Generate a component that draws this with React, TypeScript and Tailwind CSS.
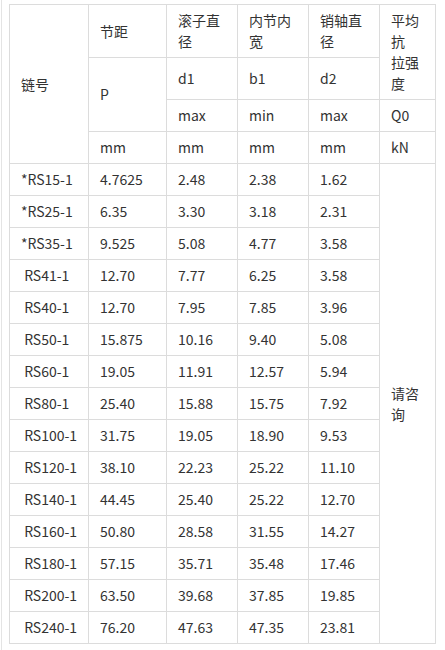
import React from "react";

const rows: string[][] = [
  ["*RS15-1", "4.7625", "2.48", "2.38", "1.62"],
  ["*RS25-1", "6.35", "3.30", "3.18", "2.31"],
  ["*RS35-1", "9.525", "5.08", "4.77", "3.58"],
  ["\u00a0RS41-1", "12.70", "7.77", "6.25", "3.58"],
  ["\u00a0RS40-1", "12.70", "7.95", "7.85", "3.96"],
  ["\u00a0RS50-1", "15.875", "10.16", "9.40", "5.08"],
  ["\u00a0RS60-1", "19.05", "11.91", "12.57", "5.94"],
  ["\u00a0RS80-1", "25.40", "15.88", "15.75", "7.92"],
  ["\u00a0RS100-1", "31.75", "19.05", "18.90", "9.53"],
  ["\u00a0RS120-1", "38.10", "22.23", "25.22", "11.10"],
  ["\u00a0RS140-1", "44.45", "25.40", "25.22", "12.70"],
  ["\u00a0RS160-1", "50.80", "28.58", "31.55", "14.27"],
  ["\u00a0RS180-1", "57.15", "35.71", "35.48", "17.46"],
  ["\u00a0RS200-1", "63.50", "39.68", "37.85", "19.85"],
  ["\u00a0RS240-1", "76.20", "47.63", "47.35", "23.81"],
];

const td = "border border-[#dcdcdc] px-[11px] py-[5px] align-middle";

export default function App() {
  return (
    <div
      className="min-h-[650px] bg-white ml-px border-l border-[#e4e4e4] pl-[7px] pt-[4px] text-[14px] leading-[21px] text-[#333]"
      style={{ fontFamily: '"Noto Sans CJK SC", "Noto Sans", sans-serif' }}
    >
      <table className="border-collapse table-fixed w-[426px]">
        <colgroup>
          <col className="w-[79px]" />
          <col className="w-[78px]" />
          <col className="w-[71px]" />
          <col className="w-[71px]" />
          <col className="w-[71px]" />
          <col className="w-[56px]" />
        </colgroup>
        <tbody>
          <tr>
            <td className={td} rowSpan={4}>链号</td>
            <td className={td}>节距</td>
            <td className={td}>滚子直径</td>
            <td className={td}>内节内宽</td>
            <td className={td}>销轴直径</td>
            <td className={td} rowSpan={2}>
              平均
              <br />
              抗<br />
              拉强
              <br />
              度
            </td>
          </tr>
          <tr>
            <td className={td} rowSpan={2}>P</td>
            <td className={td}>d1</td>
            <td className={td}>b1</td>
            <td className={td}>d2</td>
          </tr>
          <tr>
            <td className={td}>max</td>
            <td className={td}>min</td>
            <td className={td}>max</td>
            <td className={td}>Q0</td>
          </tr>
          <tr>
            <td className={td}>mm</td>
            <td className={td}>mm</td>
            <td className={td}>mm</td>
            <td className={td}>mm</td>
            <td className={td}>kN</td>
          </tr>
          {rows.map((r, i) => (
            <tr key={i}>
              {r.map((c, j) => (
                <td key={j} className={`${td} whitespace-nowrap`}>
                  {c}
                </td>
              ))}
              {i === 0 && (
                <td className={td} rowSpan={rows.length}>
                  请咨询
                </td>
              )}
            </tr>
          ))}
        </tbody>
      </table>
    </div>
  );
}
